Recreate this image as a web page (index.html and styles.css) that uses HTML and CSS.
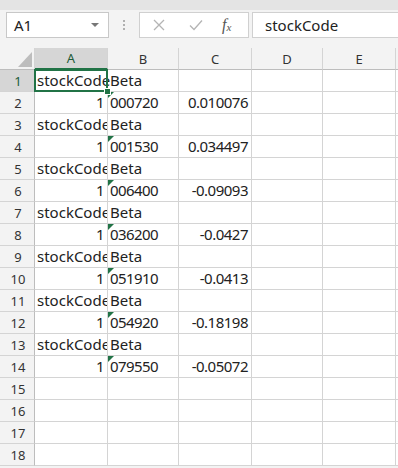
FILE: index.html
```html
<!DOCTYPE html>
<html>
<head>
<meta charset="utf-8">
<link rel="stylesheet" href="styles.css">
</head>
<body>
<div class="app">
  <div class="topband"></div>
  <div class="fbar">
    <div class="namebox"><span>A1</span><svg class="dd" width="8" height="5" viewBox="0 0 8 5"><path d="M0 0h8L4 4z" fill="#777"/></svg></div>
    <div class="dots"><i></i><i></i><i></i></div>
    <div class="btns">
      <svg class="ic" width="12" height="12" viewBox="0 0 12 12"><path d="M1 1L11 11M11 1L1 11" stroke="#b4b4b4" stroke-width="1.3"/></svg>
      <svg class="ic" width="14" height="12" viewBox="0 0 14 12"><path d="M1 6.5L5 10.5L13 1.5" stroke="#b4b4b4" stroke-width="1.3" fill="none"/></svg>
      <span class="fx">f<sub>x</sub></span>
    </div>
    <div class="finput">stockCode</div>
  </div>
  <div class="sheet">
    <div class="grid">
      <div class="corner"><svg width="14" height="15" viewBox="0 0 14 15"><path d="M14 0V15H0z" fill="#bdbdbd"/></svg></div>
      <div class="ch sel">A</div><div class="ch">B</div><div class="ch">C</div><div class="ch">D</div><div class="ch">E</div><div class="ch end"></div>

      <div class="rh sel">1</div><div class="c a1">stockCode<span class="handle"></span></div><div class="c">Beta</div><div class="c"></div><div class="c"></div><div class="c"></div><div class="c end"></div>
      <div class="rh">2</div><div class="c r">1</div><div class="c tri">000720</div><div class="c r">0.010076</div><div class="c"></div><div class="c"></div><div class="c end"></div>
      <div class="rh">3</div><div class="c">stockCode</div><div class="c">Beta</div><div class="c"></div><div class="c"></div><div class="c"></div><div class="c end"></div>
      <div class="rh">4</div><div class="c r">1</div><div class="c tri">001530</div><div class="c r">0.034497</div><div class="c"></div><div class="c"></div><div class="c end"></div>
      <div class="rh">5</div><div class="c">stockCode</div><div class="c">Beta</div><div class="c"></div><div class="c"></div><div class="c"></div><div class="c end"></div>
      <div class="rh">6</div><div class="c r">1</div><div class="c tri">006400</div><div class="c r">-0.09093</div><div class="c"></div><div class="c"></div><div class="c end"></div>
      <div class="rh">7</div><div class="c">stockCode</div><div class="c">Beta</div><div class="c"></div><div class="c"></div><div class="c"></div><div class="c end"></div>
      <div class="rh">8</div><div class="c r">1</div><div class="c tri">036200</div><div class="c r">-0.0427</div><div class="c"></div><div class="c"></div><div class="c end"></div>
      <div class="rh">9</div><div class="c">stockCode</div><div class="c">Beta</div><div class="c"></div><div class="c"></div><div class="c"></div><div class="c end"></div>
      <div class="rh">10</div><div class="c r">1</div><div class="c tri">051910</div><div class="c r">-0.0413</div><div class="c"></div><div class="c"></div><div class="c end"></div>
      <div class="rh">11</div><div class="c">stockCode</div><div class="c">Beta</div><div class="c"></div><div class="c"></div><div class="c"></div><div class="c end"></div>
      <div class="rh">12</div><div class="c r">1</div><div class="c tri">054920</div><div class="c r">-0.18198</div><div class="c"></div><div class="c"></div><div class="c end"></div>
      <div class="rh">13</div><div class="c">stockCode</div><div class="c">Beta</div><div class="c"></div><div class="c"></div><div class="c"></div><div class="c end"></div>
      <div class="rh">14</div><div class="c r">1</div><div class="c tri">079550</div><div class="c r">-0.05072</div><div class="c"></div><div class="c"></div><div class="c end"></div>
      <div class="rh">15</div><div class="c"></div><div class="c"></div><div class="c"></div><div class="c"></div><div class="c"></div><div class="c end"></div>
      <div class="rh">16</div><div class="c"></div><div class="c"></div><div class="c"></div><div class="c"></div><div class="c"></div><div class="c end"></div>
      <div class="rh">17</div><div class="c"></div><div class="c"></div><div class="c"></div><div class="c"></div><div class="c"></div><div class="c end"></div>
      <div class="rh">18</div><div class="c"></div><div class="c"></div><div class="c"></div><div class="c"></div><div class="c"></div><div class="c end"></div>
    </div>
  </div>
</div>
</body>
</html>
```

FILE: styles.css
```css
* { box-sizing: border-box; }
html, body { margin: 0; padding: 0; }
body { width: 398px; height: 468px; overflow: hidden; background: #f3f3f3; font-family: "Noto Sans", "Open Sans", sans-serif; color: #222; }
.app { display: flex; flex-direction: column; }
.topband { height: 10px; background: #e4e4e4; }
.fbar { height: 38px; display: flex; align-items: flex-start; padding-top: 2px; }
.namebox { margin-left: 6px; width: 103px; height: 26px; background: #fff; border: 1px solid #c8c8c8; display: flex; align-items: center; justify-content: space-between; padding: 0 9px 0 7px; font-size: 15px; color: #222; }
.namebox span { line-height: 1; }
.dd { margin-top: 1px; }
.dots { width: 30px; height: 26px; display: flex; flex-direction: column; align-items: center; justify-content: center; gap: 2px; }
.dots i { display: block; width: 2px; height: 2px; background: #b0b0b0; }
.btns { width: 110px; height: 26px; background: #fff; border: 1px solid #d0d0d0; display: flex; align-items: center; padding-left: 13px; }
.btns .ic:nth-child(1) { margin-right: 24px; }
.btns .ic:nth-child(2) { margin-right: 19px; }
.fx { font-family: "Liberation Serif", serif; font-style: italic; font-size: 16px; color: #555; line-height: 1; }
.fx sub { font-size: 11px; vertical-align: -1px; }
.finput { margin-left: 3px; flex: 1; height: 26px; background: #fff; border: 1px solid #d0d0d0; border-right: none; font-size: 15px; padding-left: 12px; display: flex; align-items: center; color: #222; }
.sheet { background: #fff; }
.grid { display: grid; grid-template-columns: 35px 73px 71px 73px 71px 73px 2px; grid-template-rows: 22px; grid-auto-rows: 22px; background: #fff; }
.corner { background: #f3f3f3; border-right: 1px solid #d4d4d4; border-bottom: 1px solid #bdbdbd; display: flex; align-items: flex-end; justify-content: flex-end; padding: 0 2px 2px 0; }
.ch { background: #f3f3f3; border-right: 1px solid #d4d4d4; border-bottom: 1px solid #bdbdbd; font-size: 13px; color: #333; display: flex; align-items: center; justify-content: center; }
.ch.sel { background: #d6d6d6; border-bottom: 2px solid #217346; color: #1d5b38; }
.ch.end { border-right: none; background: #f3f3f3; }
.rh { background: #f3f3f3; border-right: 1px solid #bdbdbd; border-bottom: 1px solid #d4d4d4; font-size: 13px; color: #333; display: flex; align-items: center; justify-content: center; padding-left: 2px; }
.rh.sel { background: #d6d6d6; color: #1d5b38; }
.c { position: relative; border-right: 1px solid #d4d4d4; border-bottom: 1px solid #d4d4d4; font-size: 15px; line-height: 21px; white-space: nowrap; overflow: hidden; padding: 0 2px; color: #222; }
.c.r { text-align: right; padding-right: 3px; letter-spacing: -0.5px; }
.c.tri { letter-spacing: -0.6px; }
.c.end { border-right: none; }
.c.tri::before { content: ""; position: absolute; left: 0; top: 0; border-top: 6px solid #217346; border-right: 6px solid transparent; }
.a1 { overflow: visible; z-index: 2; clip-path: inset(-3px -6px -6px -3px); }
.a1::after { content: ""; position: absolute; left: -1px; top: -1px; right: -1px; bottom: -1px; border: 2px solid #217346; pointer-events: none; z-index: 2; }
.handle { position: absolute; right: -4px; bottom: -4px; width: 7px; height: 7px; background: #217346; border: 1px solid #fff; z-index: 3; }
```
